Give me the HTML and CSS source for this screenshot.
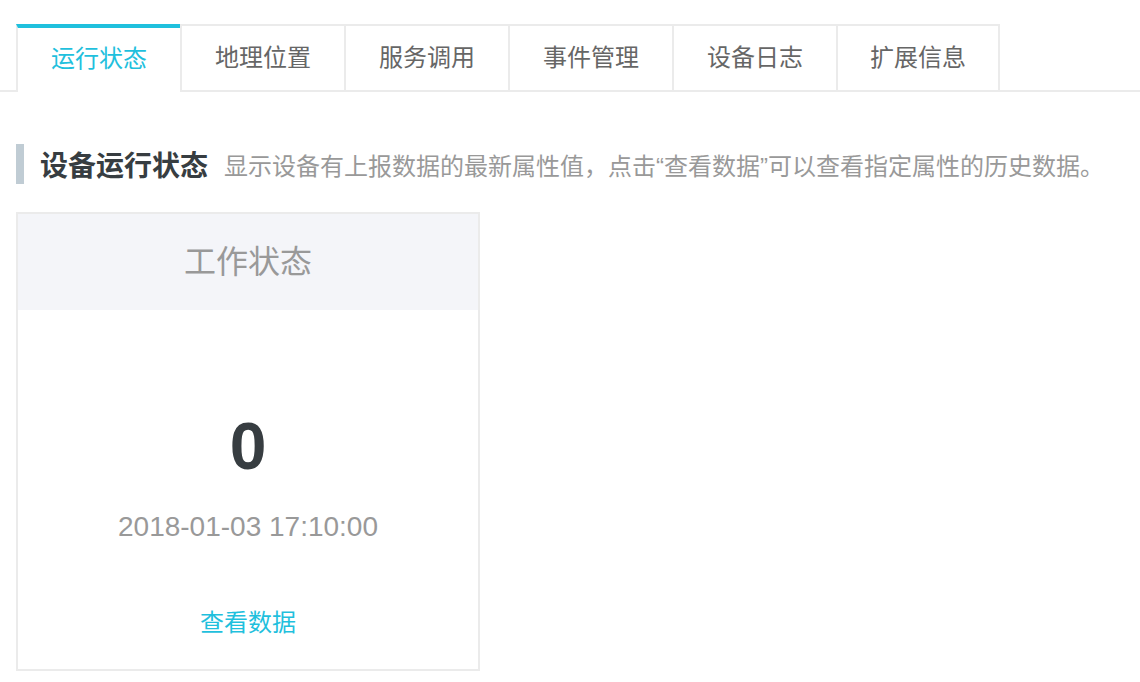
FILE: index.html
```html
<!DOCTYPE html>
<html lang="zh-CN">
<head>
<meta charset="utf-8">
<title>设备运行状态</title>
<link rel="stylesheet" href="styles.css">
</head>
<body>
<div class="tabs">
  <div class="tab active">运行状态</div>
  <div class="tab">地理位置</div>
  <div class="tab">服务调用</div>
  <div class="tab">事件管理</div>
  <div class="tab">设备日志</div>
  <div class="tab">扩展信息</div>
</div>
<div class="section-title">
  <h2 class="title">设备运行状态</h2>
  <span class="desc">显示设备有上报数据的最新属性值，点击“查看数据”可以查看指定属性的历史数据。</span>
</div>
<div class="cards">
  <div class="card">
    <div class="card-head">工作状态</div>
    <div class="card-body">
      <div class="value">0</div>
      <div class="time">2018-01-03 17:10:00</div>
      <a class="link" href="#">查看数据</a>
    </div>
  </div>
</div>
</body>
</html>
```
FILE: styles.css
```css
* { box-sizing: border-box; }
html, body { margin: 0; padding: 0; background: #fff; }
body {
  font-family: "Liberation Sans", "Noto Sans CJK SC", sans-serif;
  color: #373d41;
}
.tabs {
  display: flex;
  padding: 24px 0 0 16px;
  border-bottom: 2px solid #ebebeb;
}
.tab {
  width: 164px;
  height: 66px;
  border-top: 2px solid #ebebeb;
  border-left: 2px solid #ebebeb;
  display: flex;
  align-items: center;
  justify-content: center;
  padding-bottom: 5px;
  font-size: 24px;
  color: #666;
  background: #fff;
}
.tab:last-child {
  border-right: 2px solid #ebebeb;
}
.tab.active {
  border-top: 4px solid #1fc0dd;
  color: #1fc0dd;
  height: 68px;
  margin-bottom: -2px;
  padding-bottom: 7px;
}
.section-title {
  display: flex;
  align-items: center;
  margin: 52px 0 0 16px;
  height: 40px;
  border-left: 8px solid #c0ccd4;
  padding-left: 16px;
}
.title {
  margin: 0;
  font-size: 28px;
  font-weight: bold;
  color: #373d41;
}
.desc {
  margin-left: 16px;
  font-size: 24px;
  color: #999;
}
.cards {
  padding: 28px 0 0 16px;
}
.card {
  width: 464px;
  height: 459px;
  border: 2px solid #ebebeb;
  display: flex;
  flex-direction: column;
}
.card-head {
  height: 96px;
  background: #f4f5f9;
  display: flex;
  align-items: center;
  justify-content: center;
  padding-bottom: 6px;
  font-size: 32px;
  color: #999;
}
.card-body {
  display: flex;
  flex-direction: column;
  align-items: center;
}
.value {
  margin-top: 104px;
  font-size: 66px;
  line-height: 64px;
  font-weight: bold;
  color: #373d41;
}
.time {
  margin-top: 33px;
  font-size: 28px;
  line-height: 32px;
  color: #999;
}
.link {
  margin-top: 64px;
  font-size: 24px;
  line-height: 32px;
  color: #1fc0dd;
  text-decoration: none;
}
```
